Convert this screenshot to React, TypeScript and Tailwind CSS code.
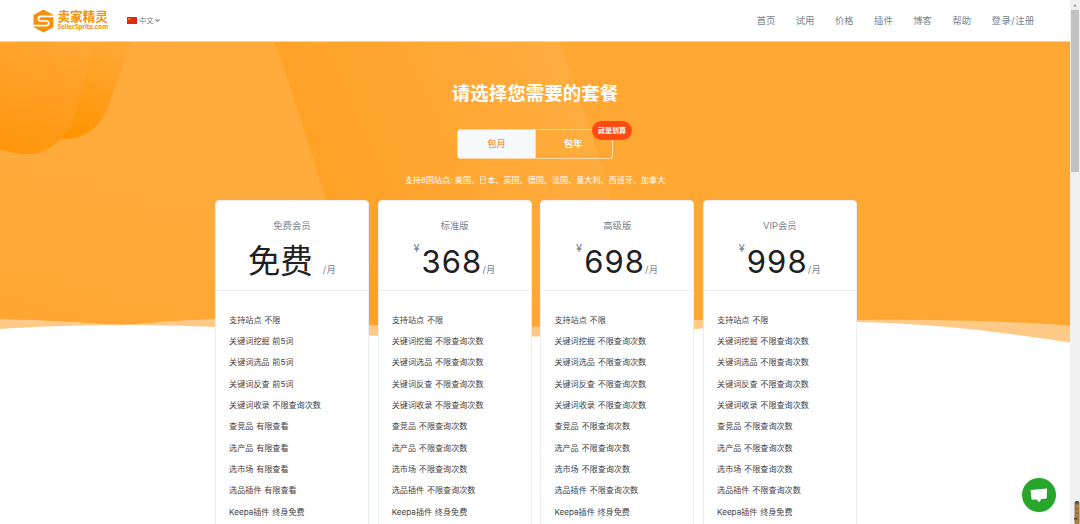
import React from 'react';
import { ChevronDown } from 'lucide-react';

interface Plan {
  name: string;
  price: string;
  features: string[];
}

const NAV_ITEMS = ['首页', '试用', '价格', '插件', '博客', '帮助'];

const UNLIMITED = [
  '支持站点 不限',
  '关键词挖掘 不限查询次数',
  '关键词选品 不限查询次数',
  '关键词反查 不限查询次数',
  '关键词收录 不限查询次数',
  '查竞品 不限查询次数',
  '选产品 不限查询次数',
  '选市场 不限查询次数',
  '选品插件 不限查询次数',
  'Keepa插件 终身免费',
];

const FREE = [
  '支持站点 不限',
  '关键词挖掘 前5词',
  '关键词选品 前5词',
  '关键词反查 前5词',
  '关键词收录 不限查询次数',
  '查竞品 有限查看',
  '选产品 有限查看',
  '选市场 有限查看',
  '选品插件 有限查看',
  'Keepa插件 终身免费',
];

const PLANS: Plan[] = [
  { name: '免费会员', price: '免费', features: FREE },
  { name: '标准版', price: '368', features: UNLIMITED },
  { name: '高级版', price: '698', features: UNLIMITED },
  { name: 'VIP会员', price: '998', features: UNLIMITED },
];

const Logo: React.FC = () => (
  <div className="flex w-[75px] items-center">
    <svg className="h-[24px] w-[21px] shrink-0" viewBox="0 0 21 24">
      <path d="M10.5 0.5 L20.5 6 V18 L10.5 23.5 L0.5 18 V6 Z" fill="#f5900a" />
      <path
        d="M21 7.3 H8.2 Q5.4 7.3 5.4 9.7 Q5.4 12 8.2 12 H13.2 Q15.7 12 15.7 14.3 Q15.7 16.6 13.2 16.6 H0"
        fill="none"
        stroke="#fff"
        strokeWidth="1.7"
      />
    </svg>
    <div className="ml-[3.5px] flex flex-col text-[#f5900a]">
      <span className="h-[13px] text-[12.6px] leading-[13px] font-bold whitespace-nowrap">卖家精灵</span>
      <span className="h-[8px] text-[6.4px] leading-[8px] font-bold tracking-[-0.1px] whitespace-nowrap font-['Open_Sans',sans-serif]">
        SellerSprite.com
      </span>
    </div>
  </div>
);

const Header: React.FC = () => (
  <header className="flex h-[41px] items-center bg-white pl-[33px] pr-[35px] text-[#77838f]">
    <Logo />
    <div className="ml-[19px] flex items-center text-[7.3px] leading-none">
      <svg className="mr-[2px] h-[7px] w-[10px]" viewBox="0 0 10 7">
        <rect width="10" height="7" fill="#de2910" />
        <circle cx="2" cy="2" r="0.9" fill="#f4a020" />
        <circle cx="4" cy="1.2" r="0.35" fill="#f4a020" />
        <circle cx="4.2" cy="2.8" r="0.35" fill="#f4a020" />
      </svg>
      中文
      <ChevronDown className="h-[7px] w-[7px]" strokeWidth={4} />
    </div>
    <nav className="ml-auto flex gap-[20.5px] text-[9.33px] leading-none">
      {NAV_ITEMS.map((item) => (
        <a key={item} href="#" className="whitespace-nowrap">
          {item}
        </a>
      ))}
      <a href="#" className="tracking-[0.55px] whitespace-nowrap">
        登录/注册
      </a>
    </nav>
  </header>
);

const HeroBackground: React.FC = () => (
  <svg className="absolute top-0 left-0 h-[303px] w-[1070px]" viewBox="0 41 1070 303">
    <defs>
      <linearGradient id="left" x1="0.8" y1="0" x2="0.45" y2="1">
        <stop offset="0" stopColor="#ffac3d" />
        <stop offset="0.6" stopColor="#ffab3b" />
        <stop offset="1" stopColor="#ffa632" />
      </linearGradient>
      <linearGradient id="middle" gradientUnits="userSpaceOnUse" x1="330" y1="230" x2="580" y2="110">
        <stop offset="0" stopColor="#ffa126" />
        <stop offset="0.45" stopColor="#ffa530" />
        <stop offset="1" stopColor="#ffad40" />
      </linearGradient>
      <linearGradient id="blobBack" gradientUnits="userSpaceOnUse" x1="115" y1="50" x2="75" y2="139">
        <stop offset="0" stopColor="#ffa733" />
        <stop offset="1" stopColor="#ff9300" />
      </linearGradient>
      <linearGradient id="blobFront" gradientUnits="userSpaceOnUse" x1="60" y1="42" x2="30" y2="154">
        <stop offset="0" stopColor="#ffa633" />
        <stop offset="1" stopColor="#ff960d" />
      </linearGradient>
      <clipPath id="wave">
        <path d="M0 41 H1070 V325.5 C1000 320.5 930 319 857 320 C800 319 750 319 695 320 C640 324 590 326 532 326.5 C480 327 420 327 370 325 C320 321 270 317 215 319 C180 319.5 150 323 120 324.3 C80 322.5 40 319 0 319 Z" />
      </clipPath>
    </defs>
    <path
      d="M0 41 H1070 V342.5 C1000 331.5 930 323.5 857 322 C800 321.5 750 324 695 329 C640 334 590 337 532 336.5 C480 338 420 337.5 370 335.5 C320 332 270 328 215 327 C150 324 70 324 0 329 Z"
      fill="#ffca87"
    />
    <g clipPath="url(#wave)">
      <rect y="41" width="1070" height="303" fill="#ffa733" />
      <path d="M0 41 H559 C580 100 598 150 611 200 L650 344 H0 Z" fill="url(#middle)" />
      <path d="M0 41 H274 C295 100 312 155 326 200 L370 344 H0 Z" fill="url(#left)" />
      <path d="M131 41 C122 68 113 94 107 110 C98 130 82 139 63 139 L0 130 V41 Z" fill="url(#blobBack)" />
      <path d="M94 41 C88 67 81 95 75 116 C68 136 50 154 28 154 C18 154 8 152 0 149 V41 Z" fill="url(#blobFront)" />
    </g>
    <rect y="41" width="1070" height="1" fill="#ffd09a" />
  </svg>
);

const PlanCard: React.FC<{ plan: Plan }> = ({ plan }) => {
  const isFree = plan.price === '免费';

  return (
    <div className="h-[340px] w-[154px] rounded-[4px] border border-[#eceef6] bg-white">
      <div className="h-[90px] border-b border-[#eceef4] pt-[19.5px] text-center text-[#77838f]">
        <div className="h-[12px] text-[9.33px] leading-[12px]">{plan.name}</div>
        <div className="mt-[8px] flex h-[44px] justify-center">
          {!isFree && <span className="mt-[2px] mr-[2px] text-[11px] leading-[12px]">¥</span>}
          {isFree ? (
            <span className="mr-[10px] text-[32.5px] leading-[44px] text-[#1e2022]">{plan.price}</span>
          ) : (
            <span className="text-[31px] leading-[44px] font-[370] tracking-[1.1px] text-[#1e2022]">{plan.price}</span>
          )}
          <span className="mt-[23px] text-[9.33px] leading-[14px] tracking-[0.3px]">/月</span>
        </div>
      </div>
      <ul className="pt-[19px] pl-[13.2px] text-[8.1px] leading-[21.33px] [word-spacing:0.5px] text-[#3f4245]">
        {plan.features.map((feature) => (
          <li key={feature} className="whitespace-nowrap">
            {feature}
          </li>
        ))}
      </ul>
    </div>
  );
};

const App: React.FC = () => {
  return (
    <div className="flex h-[524px] w-[1080px] overflow-hidden bg-white font-['Inter','Noto_Sans_CJK_SC',sans-serif]">
      <div className="relative h-full w-[1070px] overflow-hidden">
        <Header />
        <main className="relative">
          <HeroBackground />
          <div className="relative flex flex-col items-center pt-[38px] text-white">
            <h1 className="h-[28px] text-[18.5px] leading-[28px] font-bold">请选择您需要的套餐</h1>
            <div className="relative mt-[21.5px] flex h-[30px] w-[156px] rounded-[3px] border border-[#ffd9a5] text-[9.33px] leading-[28px] font-medium">
              <button className="w-[77px] rounded-l-[2px] bg-[#f5f9fc] text-[#f79338]">包月</button>
              <button className="flex-1 border-l border-[#ffd9a5] pr-[2px] font-bold">包年</button>
              <span className="absolute -top-[9px] left-[134px] h-[19px] w-[40px] rounded-full bg-[#ff4a14] text-center text-[7px] leading-[19px] font-bold">
                就是划算
              </span>
            </div>
            <p className="mt-[13.5px] h-[16px] text-[8.1px] leading-[16px] whitespace-nowrap">
              支持8国站点: 美国、日本、英国、德国、法国、意大利、西班牙、加拿大
            </p>
            <div className="mt-[11.8px] ml-[1.8px] flex gap-[8.67px]">
              {PLANS.map((plan) => (
                <PlanCard key={plan.name} plan={plan} />
              ))}
            </div>
          </div>
        </main>
        <button className="absolute top-[478px] left-[1022px] flex h-[34px] w-[34px] items-center justify-center rounded-full bg-[#28a52b] shadow-[0_0_4px_rgba(0,0,0,0.06)]">
          <svg className="h-[15px] w-[18px]" viewBox="0 0 18 15">
            <path d="M0.6 2 L17 0.5 L16.7 10.5 L11.3 11 L9.3 14.2 L6.5 11.5 L1.6 11.8 Z" fill="#fff" />
          </svg>
        </button>
      </div>
      <div className="flex w-[10px] flex-col items-center bg-[#f0f0f0]">
        <svg className="h-[10px] w-[10px]" viewBox="0 0 10 10">
          <path d="M3 6.5 L5 4 L7 6.5 Z" fill="#a0a0a0" />
        </svg>
        <div className="h-[162px] w-[8px] bg-[#c1c1c1]" />
        <svg className="mt-auto ml-[4px] h-[23px] w-[6px]" viewBox="0 0 6 23">
          <rect x="0.5" y="1" width="5" height="22" rx="1" fill="#8b7355" />
          <rect x="1" y="0" width="4" height="3" rx="1" fill="#555" />
          <path d="M2 4h3v3h-3z M1.5 9h3v2h-3z M2 13h2.5v3h-2.5z M2 19h2v4h-2z" fill="#c08028" />
          <rect x="0" y="17" width="3" height="1.5" fill="#554a40" />
        </svg>
      </div>
    </div>
  );
};

export default App;
